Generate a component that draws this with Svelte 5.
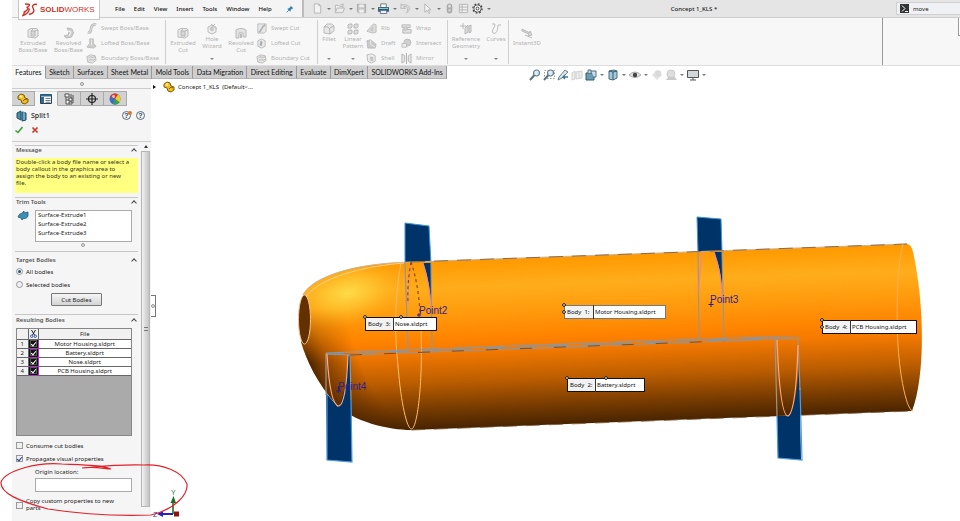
<script>
  const menus = ['File', 'Edit', 'View', 'Insert', 'Tools', 'Window', 'Help'];
  const quick = [
    { n: 'new', c: true }, { n: 'open', c: true }, { n: 'save', c: true }, { n: 'print', c: true },
    { n: 'undo', c: true }, { n: 'cursor', c: true }, { n: 'rebuild' }, { n: 'list' }, { n: 'gear', c: true, dark: true }
  ];
  const ribbon = [
    { w: 154, pad: 3, big: [['extrude', 'Extruded Boss/Base', 36], ['revolve', 'Revolved Boss/Base', 35]],
      lists: [[78, [['sweep', 'Swept Boss/Base'], ['loft', 'Lofted Boss/Base'], ['boundary', 'Boundary Boss/Base']]]] },
    { w: 152, pad: 2, big: [['extrude', 'Extruded Cut', 30], ['hole', 'Hole Wizard', 28, true], ['revcut', 'Revolved Cut', 30]],
      lists: [[60, [['sweptcut', 'Swept Cut'], ['loftcut', 'Lofted Cut'], ['boundary', 'Boundary Cut']]]] },
    { w: 130, pad: 0, big: [['fillet', 'Fillet', 22, true], ['pattern', 'Linear Pattern', 26, true]],
      lists: [[35, [['rib', 'Rib'], ['draft', 'Draft'], ['shell', 'Shell']]], [42, [['wrap', 'Wrap'], ['intersect', 'Intersect'], ['mirror', 'Mirror']]]] },
    { w: 61, pad: 0, big: [['refgeo', 'Reference Geometry', 36, true], ['curves', 'Curves', 24, true]], lists: [] },
    { w: 0, pad: 0, big: [['instant', 'Instant3D', 36]], lists: [] }
  ];
  const tabs = ['Features', 'Sketch', 'Surfaces', 'Sheet Metal', 'Mold Tools', 'Data Migration', 'Direct Editing', 'Evaluate', 'DimXpert', 'SOLIDWORKS Add-Ins'];
  const hud = [
    { n: 'zoomfit' }, { n: 'zoomarea' }, { n: 'prev' }, { n: 'section' }, { n: 'orient', c: true }, { n: 'cube', c: true },
    { n: 'eye', c: true }, { n: 'ball' }, { n: 'scene', c: true }, { n: 'monitor', c: true }
  ];
  const panelTabs = ['part', 'props', 'config', 'target', 'wheel'];
  const files = ['Motor Housing.sldprt', 'Battery.sldprt', 'Nose.sldprt', 'PCB Housing.sldprt'];
  const callouts = [
    { x: 564, y: 305, w: 102, d: 29, b: 'Body  1:', f: files[0], s: '#777', k: [[0, 0], [0, 7]] },
    { x: 567, y: 378, w: 78, d: 28, b: 'Body  2:', f: files[1], s: '#111', k: [[0, 0], [39, 0]] },
    { x: 365, y: 317, w: 72, d: 28, b: 'Body  3:', f: files[2], s: '#111', k: [[0, 0], [36, 0]] },
    { x: 822, y: 320, w: 95, d: 28, b: 'Body  4:', f: files[3], s: '#111', k: [[0, 0], [0, 7]] }
  ];
  let scope = $state('all');
</script>

{#snippet icon(n)}
  <svg class="ico" viewBox="0 0 12 12" aria-hidden="true">
    {#if n === 'new'}<path d="M2.5 1h5l2 2v8h-7zM7.500 1v2h2" fill="#f3f3f3" stroke="#b5b5b5" />
    {:else if n === 'open'}<path d="M1.500 10.500v-8h3l1 1h4v2M1.500 10.500l2-5h8l-2 5zM7 2l3-1v3" fill="#ececec" stroke="#b5b5b5" />
    {:else if n === 'save'}<path d="M1.500 1.500h9v9h-8l-1-1z" fill="#c4c4c4" stroke="#a8a8a8" /><path d="M3.500 1.500h5v3h-5zM3.500 7h5v3.500h-5z" fill="#efefef" />
    {:else if n === 'print'}<path d="M3 1h6v4H3z" fill="#fff" stroke="#5d7480" /><path d="M0 4.500h12v5H0z" fill="#2e617c" /><path d="M1 6h10" stroke="#9ccbe0" /><path d="M2.500 8h7v3.500h-7z" fill="#e5f2f8" stroke="#345" stroke-width=".7" />
    {:else if n === 'undo'}<path d="M1 1v5h5l-2-2c4-1 6 2 3 7 6-4 4-10-4-9z" fill="#ddd" stroke="#b2b2b2" stroke-width=".8" />
    {:else if n === 'cursor'}<path d="M3 1v9l2.500-2 2 3.500 1.300-.8-2-3.300h3z" fill="#f4f4f4" stroke="#b3b3b3" />
    {:else if n === 'rebuild'}<rect x="3" y=".5" width="6" height="11" rx="3" fill="#a9a9a9" /><circle cx="6" cy="3.500" r="1.600" fill="#ddd" /><circle cx="6" cy="8" r="1.600" fill="#ccc" />
    {:else if n === 'list'}<path d="M1.500 1.500h9v9h-9zM4.500 1.500v9M1.500 4.500h9M1.500 7.500h9" fill="#eee" stroke="#b5b5b5" />
    {:else if n === 'gear'}<circle cx="6" cy="6" r="4" fill="#eee" stroke="#555" /><circle cx="6" cy="6" r="5" fill="none" stroke="#444" stroke-width="1.400" stroke-dasharray="1.900 2" /><circle cx="6" cy="6" r="1.500" fill="#fff" stroke="#444" />
    {:else if n === 'extrude'}<path d="M1 3l3-1.500h6l1 1.500v6l-3 2-7-1z" fill="#e9e9e9" stroke="#bdbdbd" /><path d="M4 4h4v5H4zM4 4l2-2M8 4l3-1" fill="#d5d5d5" stroke="#b8b8b8" />
    {:else if n === 'revolve'}<path d="M4 1l5 1 1.500 4-2 4-5 1L1 9l4-1 1-3z" fill="#cfcfcf" stroke="#b8b8b8" /><path d="M5 4l3 1-2 4" fill="none" stroke="#f5f5f5" />
    {:else if n === 'sweep'}<path d="M2 10c4 1 3-3 4-6 1-2 3-3 5-2" fill="none" stroke="#bcbcbc" stroke-width="3" /><path d="M2 10c4 1 3-3 4-6 1-2 3-3 5-2" fill="none" stroke="#e4e4e4" />
    {:else if n === 'loft'}<path d="M4 1h4v5l3 3-3 2-7-1 3-4z" fill="#cdcdcd" stroke="#bbb" /><path d="M6 2v6" stroke="#eee" />
    {:else if n === 'boundary'}<path d="M1 4l4-2 5 1 1 5-4 3-5-1z" fill="#e6e6e6" stroke="#bababa" /><path d="M3 5c3-2 4 1 7-1M3 8c3-2 4 1 7-1" fill="none" stroke="#b5b5b5" />
    {:else if n === 'hole'}<path d="M2 4l4-2 4 2v5l-4 2-4-2z" fill="#eee" stroke="#bbb" /><circle cx="6" cy="6" r="2.200" fill="#c8c8c8" /><path d="M5 1l6 5M9 1L4 6" stroke="#bbb" />
    {:else if n === 'revcut'}<path d="M1 3c2-2 8-2 10 0v7H8V6H4v5H1z" fill="#e2e2e2" stroke="#bababa" /><path d="M5 7h2v4H5z" fill="#bbb" />
    {:else if n === 'sweptcut'}<path d="M2 1h9v8l-2 2H2z" fill="#e8e8e8" stroke="#bbb" /><path d="M3 10c4-1 2-6 7-8" fill="none" stroke="#b5b5b5" stroke-width="2" />
    {:else if n === 'loftcut'}<path d="M2 3l4-2 4 2v6l-4 2-4-2z" fill="#e8e8e8" stroke="#bbb" /><path d="M5 3l2 1-1 5-2-1z" fill="#aaa" />
    {:else if n === 'fillet'}<path d="M1 4l3-3h5l2 2v5l-4 3-6-1z" fill="#e8e8e8" stroke="#bbb" /><path d="M1 4c5-1 6 1 6 7M7 5l4-2" fill="none" stroke="#b0b0b0" />
    {:else if n === 'pattern'}{#each [[1, 1], [7, 1], [1, 7], [7, 7]] as p}<path d="M{p[0]} {p[1] + 1}l1-1h3v3l-1 1h-3z" fill="#ddd" stroke="#b9b9b9" />{/each}
    {:else if n === 'rib'}<path d="M1 9L8 1l3 1v8l-4 1z" fill="#ddd" stroke="#bdbdbd" /><path d="M4 8l4-5v6" fill="#c6c6c6" />
    {:else if n === 'draft'}<path d="M1 3l4-1 6 5-1 4H2z" fill="#c9c9c9" stroke="#bababa" /><path d="M5 2v5l5 3" fill="none" stroke="#eee" />
    {:else if n === 'shell'}<path d="M1 2l5-1 4 2v6l-4 2-4-2z" fill="#eee" stroke="#b9b9b9" /><path d="M4 4h4v5H5z" fill="#c4c4c4" />
    {:else if n === 'wrap'}<path d="M1 2h9v3H1zM2 7h9v4H2z" fill="#e0e0e0" stroke="#b8b8b8" /><circle cx="5" cy="6" r="2" fill="#d4d4d4" stroke="#bbb" />
    {:else if n === 'intersect'}<circle cx="7" cy="5" r="3.800" fill="#d0d0d0" stroke="#b8b8b8" /><path d="M1 6h5v4H1z" fill="#eee" stroke="#bbb" />
    {:else if n === 'mirror'}<path d="M1 1l3 2v6l-3 2zM11 1L8 3v6l3 2z" fill="#e6e6e6" stroke="#b5b5b5" /><path d="M6 0v12" stroke="#aaa" />
    {:else if n === 'refgeo'}<path d="M5 5l3-3v7l-3 2zM9 3l2-1v7l-2 1z" fill="#ddd" stroke="#b8b8b8" /><path d="M3 0v6M0 3h6" stroke="#b8b8b8" />
    {:else if n === 'curves'}<path d="M2 1h3c0 4-4 6-2 9 3 2 5-3 5-8h3" fill="none" stroke="#bbb" />
    {:else if n === 'instant'}<path d="M1 2l8 4v-2l2 4-4 1 1-2-7-3zM4 8l7 3" fill="#ddd" stroke="#b9b9b9" />
    {:else if n === 'zoomfit' || n === 'zoomarea'}{#if n === 'zoomarea'}<path d="M1.500 1.500h10v8h-10z" fill="none" stroke="#999" stroke-dasharray="1.500 1.500" />{/if}<circle cx="7.500" cy="4" r="3" fill="#dceaf2" stroke="#67808e" stroke-width="1.200" /><path d="M5.300 6.300L1 11" stroke="#587282" stroke-width="2" />
    {:else if n === 'prev'}<path d="M8 1l3 2-6 6-4 2 1-3z" fill="#d7e3ea" stroke="#6d818c" /><path d="M11 8H6l2-2M6 8l2 2" fill="none" stroke="#3f7896" stroke-width="1.300" />
    {:else if n === 'section'}<path d="M1 4l3-2v8l-3 1zM5 3l6-1v7l-6 1z" fill="#eee" stroke="#d0d0d0" /><path d="M8 3v6" stroke="#d5d5d5" />
    {:else if n === 'orient'}<path d="M1 4h8v7H1z" fill="#6b9cb5" stroke="#345a6d" /><path d="M3 4V1h3v3M6 2h5v6H9" fill="#cfdde5" stroke="#4e6f80" />
    {:else if n === 'cube'}<path d="M2 2l5-1 3 1v7l-4 2-4-1z" fill="#a5cadb" stroke="#466b7c" /><path d="M2 2l4 1v8M6 3l4-1" stroke="#345a6d" fill="none" />
    {:else if n === 'eye'}<path d="M0 6q6-6 12 0q-6 5-12 0z" fill="#e6e6e6" stroke="#999" stroke-width=".8" /><circle cx="6" cy="6" r="2.200" fill="#444" />
    {:else if n === 'ball'}<path d="M6 1l5 5-5 5-5-5z" fill="#e3e3e3" /><circle cx="7" cy="4.500" r="3.200" fill="#dadada" />
    {:else if n === 'scene'}<circle cx="6" cy="5" r="4" fill="#ddd" stroke="#ccc" /><path d="M1 11l3-4 3 2 2-2 3 4z" fill="#cacaca" />
    {:else if n === 'monitor'}<path d="M.5 1.500h11v7H.5z" fill="#d2d7da" stroke="#555" /><path d="M6 9v2M3 11h6" stroke="#555" />
    {:else if n === 'part'}<path d="M1 3l3-2 3 1 1 3 3 1v3l-3 2-3-1-1-3-3-1z" fill="#f3bd22" stroke="#7f5d06" /><circle cx="4" cy="3.500" r="1.300" fill="#fff0a8" /><path d="M6 8l2-2 2 1" stroke="#7f5d06" fill="none" />
    {:else if n === 'props'}<path d="M.5 1.500h11v9H.5z" fill="#fff" stroke="#26435a" /><path d="M.5 1.500h11v2H.5zM1 4h3v6H1z" fill="#2e6d92" /><path d="M5.500 5.500h5M5.500 7.500h5M5.500 9.300h5" stroke="#456" stroke-width=".8" />
    {:else if n === 'config'}<path d="M2 1h4v3H2zM3 4v7h3M3 7h3M6 5h3v3H6zM6 9h3v2H6z" fill="#f5f5f5" stroke="#444" stroke-width=".9" /><path d="M8 1v4M10 2v8" stroke="#555" />
    {:else if n === 'target'}<circle cx="6" cy="6" r="3.500" fill="none" stroke="#222" stroke-width="1.200" /><path d="M6 0v12M0 6h12" stroke="#222" stroke-width="1.200" />
    {:else if n === 'wheel'}<circle cx="6" cy="6" r="5.500" fill="#3a6bd0" /><path d="M6 6L1 3.500A5.500 5.500 0 0 1 9 1.400z" fill="#d83a28" /><path d="M6 6l3-4.600a5.500 5.500 0 0 1 1.500 7.800z" fill="#f0c92b" /><path d="M6 6l4.500 3.200A5.500 5.500 0 0 1 4 11z" fill="#3ba24a" /><circle cx="4.500" cy="3.500" r="1.400" fill="#fff" opacity=".7" />
    {:else if n === 'split'}<path d="M1 3l4-2v9l-4-2zM6 2l4 1v7l-4 1z" fill="#4b8bab" stroke="#1f4f68" /><path d="M5 1l3 1v8" fill="none" stroke="#9cc3d6" />
    {:else if n === 'flag'}<path d="M1 7c2-5 3-2 5-5l1-1v2l4-1v4c-2 4-4 1-6 4l-1-2z" fill="#3b8fb8" stroke="#215b78" stroke-width=".8" />
    {:else if n === 'pin'}<path d="M7 1l4 4-2 .5-2 2-.5 2.500L2 5.500 4.500 5l2-2z" fill="#2f7fb5" /><path d="M4.500 7.500L1 11" stroke="#2f7fb5" stroke-width="1.200" />
    {/if}
  </svg>
{/snippet}

<div class="app">
  <header>
    <div class="brand">
      <svg viewBox="0 0 16 14" aria-hidden="true"><path d="M3 1l4 .3c1.500.5-.5 2.700-2.500 3.200C7 4.300 6.500 7 1.500 9.500M7 5.500C8 8 4 12 1 12.500L3.500 8M15 1.500c-3-1-5.500 1-4 3.500s1.500 5-4 6.500" fill="none" stroke="#cc3328" stroke-width="1.400" /></svg>
      <span><b>SOLID</b>WORKS</span>
    </div>
    <nav>{#each menus as m}<a href="#{m}">{m}</a>{/each}<span class="pin">{@render icon('pin')}</span></nav>
    <div class="quick">
      <div class="tools">
        {#each quick as q}
          <button class="tool" aria-label={q.n}>{@render icon(q.n)}</button>
          {#if q.c}<i class="caret"></i>{/if}
        {/each}
      </div>
      <div class="title">Concept 1_KLS *</div>
      <label class="search">
        <svg viewBox="0 0 9 9" aria-hidden="true"><path d="M0 0h9v9H0z" fill="#333" /><path d="M2 1.500l3 3-3 3M5 7.500h3" stroke="#fff" fill="none" /></svg>
        <input value="move" aria-label="Search commands" />
      </label>
    </div>
  </header>

  <div class="ribbon">
    {#each ribbon as g}
      <div class="group" class:last={!g.w} style:width={g.w ? g.w + 'px' : null} style:padding-left="{g.pad}px">
        {#each g.big as b}
          <button class="big" class:drop={b[3]} style:width="{b[2]}px">
            {@render icon(b[0])}<span>{b[1]}</span>
            {#if b[3]}<i class="caret"></i>{/if}
          </button>
        {/each}
        {#each g.lists as l}
          <div class="list" style:width="{l[0]}px">
            {#each l[1] as it}<button>{@render icon(it[0])}{it[1]}</button>{/each}
          </div>
        {/each}
      </div>
    {/each}
    <div class="spare"><i></i></div>
  </div>

  <div class="tabrow">
    <div class="tabs">{#each tabs as t, i}<button class:on={i === 0}>{t}</button>{/each}</div>
    <div class="hud">
      {#each hud as h}
        <button class="tool" aria-label={h.n}>{@render icon(h.n)}</button>
        {#if h.c}<i class="caret"></i>{/if}
      {/each}
    </div>
  </div>

  <main>
    <aside>
      <div class="grip"><i class="dot"></i></div>
      <div class="ptabs">{#each panelTabs as p, i}<button class:on={i === 1} aria-label={p}>{@render icon(p)}</button>{/each}</div>
      <div class="head">
        {@render icon('split')}<h1>Split1</h1>
        <button class="help" aria-label="What's new">?<i></i></button><button class="help" aria-label="Help">?</button>
      </div>
      <div class="confirm">
        <button aria-label="OK"><svg viewBox="0 0 8 8"><path d="M.5 4.500l2.500 2L7.500 1" fill="none" stroke="#3aa03a" stroke-width="1.600" /></svg></button>
        <button aria-label="Cancel"><svg viewBox="0 0 8 8"><path d="M1.500 1.500l5 5M6.500 1.500l-5 5" stroke="#d03a24" stroke-width="1.700" /></svg></button>
      </div>
      <div class="scroller">
        <div class="content">
          <section class="message">
            <h2>Message<i class="chev"></i></h2>
            <p>Double-click a body file name or select a body callout in the graphics area to assign the body to an existing or new file.</p>
          </section>
          <section class="trim">
            <h2>Trim Tools<i class="chev"></i></h2>
            <div class="pick">
              {@render icon('flag')}
              <ul><li>Surface-Extrude1</li><li>Surface-Extrude2</li><li>Surface-Extrude3</li></ul>
            </div>
            <i class="dot"></i>
          </section>
          <section class="target">
            <h2>Target Bodies<i class="chev"></i></h2>
            <label><input type="radio" value="all" bind:group={scope} />All bodies</label>
            <label><input type="radio" value="selected" bind:group={scope} />Selected bodies</label>
            <button class="cut">Cut Bodies</button>
          </section>
          <section class="result">
            <h2>Resulting Bodies<i class="chev"></i></h2>
            <div class="grid">
              <table>
                <thead>
                  <tr><th></th><th><svg viewBox="0 0 7 8" aria-label="Cut"><path d="M1.500 0l3 5M5.500 0l-3 5" stroke="#222" /><circle cx="1.700" cy="6.300" r="1.200" fill="none" stroke="#2b4fb0" /><circle cx="5.300" cy="6.300" r="1.200" fill="none" stroke="#2b4fb0" /></svg></th><th>File</th></tr>
                </thead>
                <tbody>
                  {#each files as f, i}
                    <tr><th>{i + 1}</th><td class="ck"><input type="checkbox" checked aria-label={f} /></td><td>{f}</td></tr>
                  {/each}
                </tbody>
              </table>
            </div>
            <label><input type="checkbox" />Consume cut bodies</label>
            <label><input type="checkbox" checked />Propagate visual properties</label>
            <div class="origin">
              <label for="origin">Origin location:</label>
              <input id="origin" type="text" />
            </div>
            <label class="copy"><input type="checkbox" /><span>Copy custom properties to new parts</span></label>
          </section>
        </div>
        <div class="bar"><div class="up"></div><div class="thumb"><i></i></div></div>
      </div>
    </aside>

    <div class="stage">
      <button class="flap" aria-label="Collapse panel"><i class="dot"></i></button>
      <div class="tree"><i class="tri"></i>{@render icon('part')}<span>Concept 1_KLS&nbsp; (Default&lt;...</span></div>
      <svg class="model" viewBox="151 79 809 442" preserveAspectRatio="xMinYMin meet" aria-label="Concept 1 model">
        <defs>
          <linearGradient id="hull" gradientUnits="userSpaceOnUse" x1="411" y1="262" x2="417" y2="430">
            <stop offset="0" stop-color="#ff9900" /><stop offset=".16" stop-color="#ffad1c" /><stop offset=".28" stop-color="#ff9f10" />
            <stop offset=".46" stop-color="#ff8400" /><stop offset=".54" stop-color="#f57a00" /><stop offset=".72" stop-color="#bb5d00" />
            <stop offset=".88" stop-color="#763b00" /><stop offset="1" stop-color="#472300" />
          </linearGradient>
          <radialGradient id="glow" gradientUnits="userSpaceOnUse" cx="0" cy="0" r="1" gradientTransform="translate(348 293) rotate(-12) scale(60 33)">
            <stop offset="0" stop-color="#ffdc48" /><stop offset=".45" stop-color="#ffc632" stop-opacity=".75" /><stop offset="1" stop-color="#ffaa18" stop-opacity="0" />
          </radialGradient>
          <radialGradient id="shade" gradientUnits="userSpaceOnUse" cx="0" cy="0" r="1" gradientTransform="translate(440 270) scale(150 260)">
            <stop offset=".64" stop-color="#3a1c00" stop-opacity="0" /><stop offset=".84" stop-color="#3a1c00" stop-opacity=".5" /><stop offset=".96" stop-color="#2c1500" stop-opacity=".9" />
          </radialGradient>
          <linearGradient id="fade" x1="0" y1="0" x2="0" y2="1"><stop offset=".3" stop-color="#000" /><stop offset=".6" stop-color="#fff" /></linearGradient>
          <mask id="low" maskUnits="userSpaceOnUse" x="290" y="255" width="122" height="180"><rect x="290" y="255" width="122" height="180" fill="url(#fade)" /></mask>
        </defs>
        <g fill="#003468" stroke="#3f95dc">
          <path d="M405 223L429 226L431 264L405 264z" />
          <path d="M697 217L721 219L722 252L698 253z" />
        </g>
        <path id="body" d="M303 295C308 284 335 264 411 262L907 244Q911 244 913 252C924 300 926 375 912 411L411 430C390 430 352 422 335 403C318 384 307 362 301 342z" fill="url(#hull)" />
        <path d="M303 295C308 284 335 264 411 262V330H303z" fill="url(#glow)" />
        <path d="M303 295C308 284 335 264 411 262V430C390 430 352 422 335 403C318 384 307 362 301 342z" fill="url(#shade)" mask="url(#low)" />
        <ellipse cx="304.500" cy="319.500" rx="6" ry="24.500" fill="#633100" stroke="#f6c58c" />
        <g fill="none" stroke="#e8a45c">
          <path d="M303 295C308 284 335 264 411 262L907 244" stroke="#c9b59b" />
          <path d="M306 297C314 284 345 268 404 263" stroke="#ffd9a5" stroke-width=".8" />
          <path d="M411 262L907 244M411 430L912 411" stroke="#7c5634" stroke-dasharray="14 9" stroke-width=".8" />
          <path d="M401 263C394 300 395 340 398 366C401 404 407 429 411.500 429C417 429 423 385 421 330" stroke="#ffbd6a" />
          <path d="M903 244C896 270 896 330 899 358C902 388 908 411 913 411" stroke="#ffb054" />
        </g>
        <g fill="#003468">
          <path d="M423 263L431 263V308Q430 280 423 263z" />
          <path d="M714 252H722V288Q721 268 714 252z" />
          <path d="M326 393L338 407Q345 400 348 355H350L352 462L327 460z" />
          <path d="M777 416L788 416Q797 408 799 362L801 460L778 458z" />
        </g>
        <g fill="none" stroke="#4b9de0" stroke-width="1.200">
          <path d="M327 394V460L352 462L351 400M777 416L778 458L802 460L800 388" />
        </g>
        <g fill="none" stroke="#9a9690" stroke-width="1.200">
          <path d="M405 262L408 349M431 262L432 351M698 252L699 340M722 250L724 340M326 353V395M350 354L351 400M775 338L777 416M798 338L800 390" />
          <path d="M326 353L700 339L775 337L799 338M326 354L350 355L724 341L799 338" stroke="#8c97a6" />
          <path d="M326 354L775 338" stroke="#5c9fdc" stroke-dasharray="18 14" stroke-width=".8" />
          <path d="M350 355L724 341" stroke="#713d13" stroke-dasharray="12 22" stroke-width=".8" />
        </g>
        <g fill="none" stroke="#ffab80" stroke-width="1.200">
          <path d="M327 354Q330 406 339 406Q346 404 348 355M777 340Q780 416 788 416Q796 412 798 345" />
          <path d="M411 262Q408 285 408 305M423 263Q430 285 431 308M703 252Q699 270 699 292M714 252Q722 275 722 300" stroke="#ed8b83" />
          <path d="M411 262Q418 282 420 312M411 262Q407 285 408 302" stroke="#8c4a18" stroke-dasharray="3 3" />
        </g>
        <g class="pt" fill="#33208e">
          <text x="419" y="314">Point2</text><text x="710" y="303">Point3</text><text x="338" y="390">Point4</text>
          <path d="M417 315h4M419 313v4M708.500 304.500h5M711 302v5M336 391h5M338.500 386v7" stroke="#2418a8" />
        </g>
        {#each callouts as c}
          <g transform="translate({c.x} {c.y})">
            <rect x=".5" y=".5" width={c.w - 1} height="13" fill="#fff" stroke={c.s} />
            <path d="M1 1h{c.d - 1}v12H1z" fill="#f2f2f2" /><path d="M{c.d + .5} 0v14" stroke="#333" />
            <text x="3" y="9" class="lbl">{c.b}</text><text x={c.d + 2} y="9" class="lbl">{c.f}</text>
            {#each c.k as k}<circle cx={k[0]} cy={k[1]} r="1.400" fill="#fff" stroke="#111" />{/each}
          </g>
        {/each}
        <g>
          <path d="M173 514V500" stroke="#1d6b25" stroke-width="1.600" /><path d="M170.500 503L173.500 496L176 503z" fill="#1d6b25" />
          <path d="M173 514H161" stroke="#2721b9" stroke-width="2" /><path d="M163 511L157 514L163 517z" fill="#2721b9" />
          <path d="M174 511.500h5v5h-5z" fill="#8e1414" /><text x="171" y="495" class="ax" fill="#2f7a3a">Y</text><text x="153" y="517" class="ax" fill="#2c2cc0">Z</text>
        </g>
      </svg>
    </div>
  </main>
  <svg class="ink" viewBox="0 0 200 70" aria-hidden="true"><path d="M82 17C95 15 105 18 111 18C100 14 86 14 62 13C38 11 6 19 1 31C0 42 18 50 48 58C80 63 120 65 151 64C176 58 188 43 187 33C182 20 162 13 144 14C120 13 95 16 82 17" fill="none" stroke="#e0222b" stroke-width="1.200" /></svg>
</div>

<style>
  :global(body) { margin: 0; background: #fff; }
  * { box-sizing: border-box; }
  .app { position: relative; height: 100vh; overflow: hidden; display: flex; flex-direction: column; padding-left: 12px; font: 6px/8px "Noto Sans", "Open Sans", sans-serif; color: #222; background: #fff; }
  button, input { font: inherit; color: inherit; margin: 0; padding: 0; border: 0; background: none; }
  i { font-style: normal; }
  .ico { width: 12px; height: 12px; display: block; flex: none; }
  .caret { border: 2px solid transparent; border-top-color: currentColor; border-bottom: 0; width: 4px; height: 2px; flex: none; }
  .dot { width: 4px; height: 4px; border: 1px solid #999; border-radius: 50%; background: #e5e5e5; }

  header { height: 18px; flex: none; display: flex; background: #f4f4f4; border-bottom: 1px solid #cdcdcd; }
  .brand { position: relative; z-index: 1; width: 82px; height: 20px; margin-left: 6px; padding-left: 3px; display: flex; align-items: center; gap: 2px; background: #fff; border: 1px solid #c6c6c6; border-top: 0; color: #c8352b; font: 8px/10px "Liberation Sans", Arial, sans-serif; }
  .brand svg { width: 16px; height: 14px; }
  nav { width: 202px; padding-left: 15px; display: flex; align-items: center; gap: 9px; }
  nav a { color: #111; text-decoration: none; font-weight: 500; }
  .pin { margin-left: 5px; }
  .pin .ico { width: 8px; height: 8px; }
  .quick { flex: 1; display: flex; align-items: center; background: #e5e5e5; border-left: 2px solid #bbb; }
  .tools { display: flex; align-items: center; padding-left: 6px; color: #777; }
  .tool { width: 14px; display: flex; justify-content: center; }
  .tools .ico { width: 11px; height: 11px; }
  .tools .caret { margin: 0 1px 0 3px; }
  .title { flex: 1; text-align: center; color: #222; font-weight: 500; }
  .search { width: 64px; height: 13px; padding-left: 3px; display: flex; align-items: center; gap: 4px; background: #f0f1f4; border: 1px solid #d0d0d0; border-right: 0; }
  .search svg { width: 9px; height: 9px; }
  .search input { width: 40px; min-width: 0; }

  .ribbon { height: 48px; flex: none; display: flex; background: #f7f7f7; border-bottom: 1px solid #ddd; color: #b3b3b3; }
  .group { display: flex; align-items: flex-start; padding-top: 3px; position: relative; }
  .group:not(.last) { border-right: 1px solid #cfcfcf; margin: 2px 0 1px; padding-top: 1px; }
  .group.last { flex: 1; }
  .big { height: 43px; padding-top: 6px; display: flex; flex-direction: column; align-items: center; gap: 1px; line-height: 7px; text-align: center; flex: none; }
  .big.drop { padding-top: 2px; position: relative; }
  .big.drop .caret { position: absolute; bottom: 4px; color: #888; }
  .list { display: flex; flex-direction: column; gap: 1px; flex: none; }
  .list button { height: 14px; display: flex; align-items: center; gap: 4px; white-space: nowrap; }
  .list .ico { width: 11px; height: 11px; }
  .spare { width: 78px; border-left: 1px solid #999; display: flex; justify-content: flex-end; }
  .spare i { width: 2px; height: 18px; background: #fff; border: 1px solid #999; border-width: 0 0 1px 1px; }

  .tabrow { height: 13px; flex: none; display: flex; }
  .tabs { width: 435px; display: flex; flex: none; }
  .tabs button { flex: 1 0 auto; height: 13px; padding: 0 3px; background: #cfcfcf; border-right: 1px solid #999; border-bottom: 1px solid #b5b5b5; font: 7px/12px Lato, "Open Sans", sans-serif; color: #111; }
  .tabs .on { background: #f7f7f7; border-bottom-color: #f7f7f7; }
  .hud { padding: 1px 0 0 81px; height: 16px; display: flex; align-items: center; color: #777; position: relative; z-index: 1; }
  .hud .caret { margin: 0 2px; }

  main { flex: 1; min-height: 0; display: flex; }
  aside { width: 139px; flex: none; display: flex; flex-direction: column; background: #f5f5f5; }
  .grip { height: 10px; display: flex; justify-content: center; align-items: center; border-bottom: 1px solid #ccc; flex: none; }
  .ptabs { display: flex; height: 17px; padding-top: 2px; flex: none; }
  .ptabs button { width: 23px; display: flex; align-items: center; justify-content: center; background: #d2d2d2; border: 1px solid #aaa; border-left: 0; }
  .ptabs .on { background: #f5f5f5; border-bottom-color: #f5f5f5; border-top-color: #ddd; }
  .head { display: flex; align-items: center; height: 19px; padding: 0 6px 0 4px; gap: 3px; flex: none; }
  h1 { margin: 0; flex: 1; font: 500 7px/10px "Noto Sans", sans-serif; }
  .help { width: 9px; height: 9px; margin-left: 2px; border: 1px solid #5a6d78; border-radius: 50%; color: #246; font: 700 7px/7px "Liberation Sans", Arial, sans-serif; position: relative; }
  .help i { position: absolute; top: -1px; right: -2px; width: 4px; height: 4px; background: #e2762c; border-radius: 50%; }
  .confirm { display: flex; align-items: flex-start; gap: 8px; padding: 1px 3px 0; height: 17px; border-bottom: 1px solid #ccc; flex: none; }
  .confirm svg { width: 8px; height: 8px; display: block; }
  .scroller { flex: 1; min-height: 0; display: flex; overflow: hidden; }
  .content { flex: 1; padding: 3px 3px 0 3px; }
  .bar { width: 9px; margin-right: 1px; display: flex; flex-direction: column; }
  .up { height: 9px; display: flex; }
  .up::before { content: ""; margin: 3px auto; border: 2px solid transparent; border-bottom: 3px solid #333; border-top: 0; height: 0; }
  .thumb { height: 356px; border: 1px solid #b5b5b5; background: linear-gradient(90deg, #f2f2f2, #d5d5d5 60%, #c4c4c4); display: flex; align-items: center; justify-content: center; }
  .thumb i { width: 4px; height: 4px; border: 1px solid #777; border-width: 1px 0; }
  section { border-top: 1px solid #c6c6c6; }
  h2 { margin: 0; display: flex; align-items: flex-start; justify-content: space-between; height: 12px; padding: 0 2px 0 1px; font: 600 6px/8px "Noto Sans", sans-serif; color: #555; }
  .chev { width: 4px; height: 4px; margin-top: 3px; border: 1px solid #444; border-width: 1px 0 0 1px; transform: rotate(45deg); }
  p { margin: 0; height: 35px; padding: 1px 6px 0 1px; background: #ffff80; line-height: 7px; color: #332; }
  .message { height: 52px; }
  .trim { height: 54px; display: flex; flex-direction: column; }
  .trim .dot { margin: 1px 0 0 66px; }
  .pick { display: flex; gap: 6px; padding-left: 2px; align-items: flex-start; }
  ul { margin: 0; padding: 0 2px; width: 97px; height: 32px; border: 1px solid #aaa; background: #fff; list-style: none; line-height: 9px; }
  .target { height: 63px; display: flex; flex-direction: column; }
  .target h2 { height: 13px; padding-top: 4px; }
  label { display: flex; align-items: center; gap: 3px; height: 13px; padding-left: 1px; }
  input[type='checkbox'], input[type='radio'] { appearance: none; width: 7px; height: 7px; flex: none; border: 1px solid #999; background: #eef0f2; display: grid; place-items: center; }
  input[type='radio'] { border-radius: 50%; }
  input[type='radio']:checked::after { content: ""; width: 3px; height: 3px; border-radius: 50%; background: #24597a; }
  input[type='checkbox']:checked::after { content: ""; width: 2px; height: 4px; border: solid #25358f; border-width: 0 1px 1px 0; transform: rotate(40deg); }
  .cut { width: 51px; height: 13px; margin: 2px 0 0 36px; border: 1px solid #777; border-radius: 1px; background: linear-gradient(#f5f5f5, #d4d4d4); }
  .result h2 { height: 13px; padding-top: 1px; }
  .grid { width: 116px; height: 108px; margin-left: 1px; background: #aaa; border: 1px solid #888; }
  table { width: 114px; border-collapse: collapse; table-layout: fixed; line-height: 8px; }
  th, td { padding: 0; height: 9px; border: 1px solid #666; text-align: center; background: #fff; font-weight: 400; }
  th { background: #f1f1f1; }
  tr > :nth-child(1) { width: 11px; border-left: 0; }
  tr > :nth-child(2) { width: 10px; }
  tr > :nth-child(3) { border-right: 0; }
  thead th { height: 10px; border-top: 0; }
  thead svg { width: 7px; height: 8px; display: block; margin: auto; }
  .ck { background: #111; border: 1px solid #b02fc0; }
  .ck input[type='checkbox'] { background: #111; border-color: #555; margin: auto; }
  .ck input[type='checkbox']:checked::after { border-color: #fff; }
  .grid + label { margin-top: 3px; }
  .origin { padding-left: 20px; }
  .origin label { padding: 0; }
  .origin input { display: block; width: 97px; height: 14px; border: 1px solid #aaa; background: #fff; }
  .copy { height: 26px; line-height: 7px; }
  .copy span { width: 96px; }

  .stage { flex: 1; min-width: 0; position: relative; }
  .tree { position: absolute; top: 2px; left: 2px; display: flex; align-items: center; gap: 3px; }
  .tri { border: 2px solid transparent; border-left: 3px solid #111; border-right: 0; margin-right: 4px; height: 4px; }
  .model { display: block; width: 100%; height: 100%; }
  .flap { position: absolute; left: 0; top: 216px; width: 5px; height: 22px; border: 1px solid #777; border-left: 0; display: flex; align-items: center; }
  .lbl { font: 6px "Noto Sans", sans-serif; fill: #111; white-space: pre; }
  .pt text { font: 10px "Liberation Sans", Arial, sans-serif; }
  .ax { font: 7px "Liberation Sans", Arial, sans-serif; }
  .ink { position: absolute; left: 0; top: 451px; width: 200px; height: 70px; pointer-events: none; }
</style>
